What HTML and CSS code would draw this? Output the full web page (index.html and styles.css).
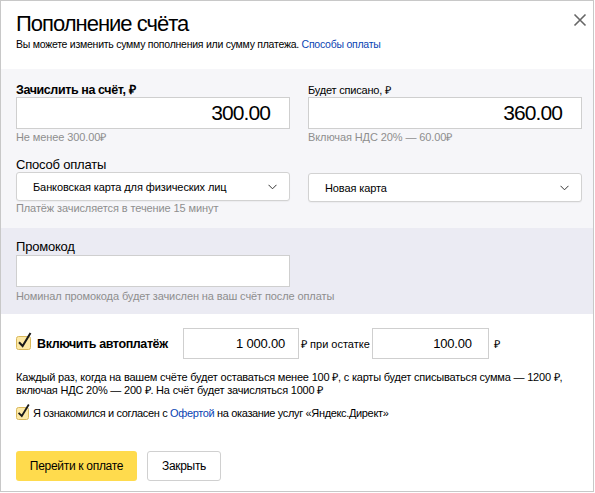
FILE: index.html
```html
<!DOCTYPE html>
<html lang="ru">
<head>
<meta charset="utf-8">
<title>Пополнение счёта</title>
<link rel="stylesheet" href="styles.css">
</head>
<body>
<div class="dialog">
  <header class="head">
    <div class="head-row">
      <h1 class="title">Пополнение счёта</h1>
      <button class="close" aria-label="Закрыть">
        <svg width="14" height="14" viewBox="0 0 14 14"><path d="M1.5 1.5 L12.5 12.5 M12.5 1.5 L1.5 12.5" stroke="#666" stroke-width="1.6" fill="none"/></svg>
      </button>
    </div>
    <p class="subtitle">Вы можете изменить сумму пополнения или сумму платежа. <a class="link" href="#">Способы оплаты</a></p>
  </header>

  <section class="amounts">
    <div class="grid">
      <div class="field">
        <div class="label label-bold">Зачислить на счёт, ₽</div>
        <div class="input input-big">300.00</div>
        <div class="hint">Не менее 300.00₽</div>
      </div>
      <div class="field">
        <div class="label label-small">Будет списано, ₽</div>
        <div class="input input-big">360.00</div>
        <div class="hint">Включая НДС 20% — 60.00₽</div>
      </div>
      <div class="field">
        <div class="label">Способ оплаты</div>
        <div class="select"><span>Банковская карта для физических лиц</span>
          <svg class="chev" width="9" height="6" viewBox="0 0 9 6"><path d="M0.5 0.8 L4.5 4.8 L8.5 0.8" stroke="#333" stroke-width="1" fill="none"/></svg>
        </div>
        <div class="hint">Платёж зачисляется в течение 15 минут</div>
      </div>
      <div class="field field-end">
        <div class="select"><span>Новая карта</span>
          <svg class="chev" width="9" height="6" viewBox="0 0 9 6"><path d="M0.5 0.8 L4.5 4.8 L8.5 0.8" stroke="#333" stroke-width="1" fill="none"/></svg>
        </div>
      </div>
    </div>
  </section>

  <section class="promo">
    <div class="label">Промокод</div>
    <div class="input input-promo"></div>
    <div class="hint hint-promo">Номинал промокода будет зачислен на ваш счёт после оплаты</div>
  </section>

  <section class="autopay">
    <div class="autopay-row">
      <span class="check check-big">
        <svg width="18" height="20" viewBox="0 0 18 20"><rect x="0.5" y="5.5" width="14" height="13" rx="2" fill="#fde9a6" stroke="#d9b85c"/><path d="M3 11.2 L6.6 15 L14.5 2" stroke="#1a1a1a" stroke-width="2" fill="none" stroke-linejoin="miter"/></svg>
      </span>
      <span class="autopay-label">Включить автоплатёж</span>
      <div class="input input-small input-sum">1 000.00</div>
      <span class="unit">₽ при остатке</span>
      <div class="input input-small input-rest">100.00</div>
      <span class="unit unit-last">₽</span>
    </div>
    <p class="desc">Каждый раз, когда на вашем счёте будет оставаться менее 100 ₽, с карты будет списываться сумма — 1200 ₽,<br>включая НДС 20% — 200 ₽. На счёт будет зачисляться 1000 ₽</p>
    <div class="agree">
      <span class="check check-small">
        <svg width="16" height="17" viewBox="0 0 16 17"><rect x="0.5" y="4.5" width="12" height="12" rx="2" fill="#fde9a6" stroke="#d9b85c"/><path d="M2.6 9.8 L5.8 13 L12.8 1.5" stroke="#1a1a1a" stroke-width="1.8" fill="none"/></svg>
      </span>
      <span class="agree-text">Я ознакомился и согласен с <a class="link" href="#">Офертой</a> на оказание услуг «Яндекс.Директ»</span>
    </div>
    <div class="actions">
      <button class="btn btn-primary">Перейти к оплате</button>
      <button class="btn btn-default">Закрыть</button>
    </div>
  </section>
</div>
</body>
</html>
```

FILE: styles.css
```css
* { box-sizing: border-box; }
html, body { margin: 0; padding: 0; background: #fff; }
body {
  font-family: "Liberation Sans", Arial, sans-serif;
  color: #000;
}
.dialog {
  width: 594px;
  height: 492px;
  border: 1px solid #c8c8c8;
  background: #fff;
  overflow: hidden;
}
.head { padding: 9px 6px 18px 15px; }
.head-row { display: flex; justify-content: space-between; align-items: flex-start; }
.title {
  margin: 0;
  font-size: 22px;
  line-height: 27px;
  font-weight: normal;
  letter-spacing: -1px;
}
.close {
  border: 0;
  background: none;
  padding: 0;
  margin: 3px 0 0 0;
  width: 14px;
  height: 14px;
  display: block;
  cursor: pointer;
}
.close svg { display: block; }
.subtitle {
  margin: 0;
  font-size: 10.5px;
  line-height: 14px;
  letter-spacing: -0.25px;
}
.link { color: #0a44b3; text-decoration: none; }

.amounts {
  background: #f6f6f9;
  padding: 14px 10px 13px 15px;
}
.grid {
  display: grid;
  grid-template-columns: 274px 274px;
  column-gap: 18px;
  row-gap: 14px;
}
.field { display: flex; flex-direction: column; }
.field-end { justify-content: flex-start; padding-top: 15px; }
.label {
  font-size: 13px;
  line-height: 14px;
  letter-spacing: -0.2px;
}
.label-bold { font-weight: bold; font-size: 12.5px; letter-spacing: -0.4px; }
.label-small { font-size: 11px; }
.input {
  background: #fff;
  border: 1px solid #cfcfcf;
}
.input-big {
  height: 32px;
  font-size: 21px;
  line-height: 30px;
  text-align: right;
  padding-right: 19px;
  letter-spacing: -0.9px;
}
.hint {
  font-size: 11px;
  line-height: 14px;
  color: #8e8e8e;
  margin-top: 1px;
  letter-spacing: -0.1px;
}
.select {
  height: 29px;
  background: #fff;
  border: 1px solid #d2d2d2;
  border-radius: 3px;
  display: flex;
  align-items: center;
  justify-content: space-between;
  padding: 0 12px 0 16px;
  font-size: 11px;
  letter-spacing: -0.1px;
  box-shadow: 0 1px 1px rgba(0,0,0,0.04);
}
.chev { display: block; }
.select + .hint { margin-top: 0; }

.promo {
  background: #ebebf3;
  padding: 12px 10px 11px 15px;
}
.input-promo {
  width: 274px;
  height: 32px;
  margin-top: 1px;
}
.hint-promo { margin-top: 2px; }

.autopay { padding: 14px 10px 0 15px; }
.autopay-row {
  display: flex;
  align-items: center;
  height: 31px;
}
.check { display: block; flex: none; }
.check svg { display: block; }
.check-big { margin-top: -5px; }
.autopay-label {
  font-size: 12.5px;
  font-weight: bold;
  margin-left: 3px;
  letter-spacing: -0.4px;
  width: 146px;
}
.input-small {
  height: 31px;
  font-size: 13px;
  line-height: 29px;
  text-align: right;
  letter-spacing: -0.2px;
}
.input-sum { width: 116px; padding-right: 13px; }
.input-rest { width: 117px; padding-right: 16px; }
.unit {
  font-size: 11px;
  margin: 0 2px 0 2px;
  letter-spacing: 0;
}
.unit-last { margin-left: 5px; }
.desc {
  margin: 12px 0 0 0;
  font-size: 11px;
  line-height: 13px;
  letter-spacing: -0.2px;
}
.agree {
  display: flex;
  align-items: flex-end;
  margin-top: 6px;
}
.agree-text {
  font-size: 11px;
  line-height: 14px;
  margin-left: 1px;
  letter-spacing: -0.35px;
}
.actions {
  display: flex;
  gap: 10px;
  margin-top: 31px;
}
.btn {
  height: 30px;
  border-radius: 3px;
  font-family: inherit;
  font-size: 12px;
  padding: 0;
  cursor: pointer;
  letter-spacing: -0.3px;
  color: #000;
  white-space: nowrap;
}
.btn-primary {
  background: #ffdb4d;
  border: 0;
  width: 121px;
}
.btn-default {
  background: #fff;
  border: 1px solid #d0d0d0;
  width: 74px;
}
```
